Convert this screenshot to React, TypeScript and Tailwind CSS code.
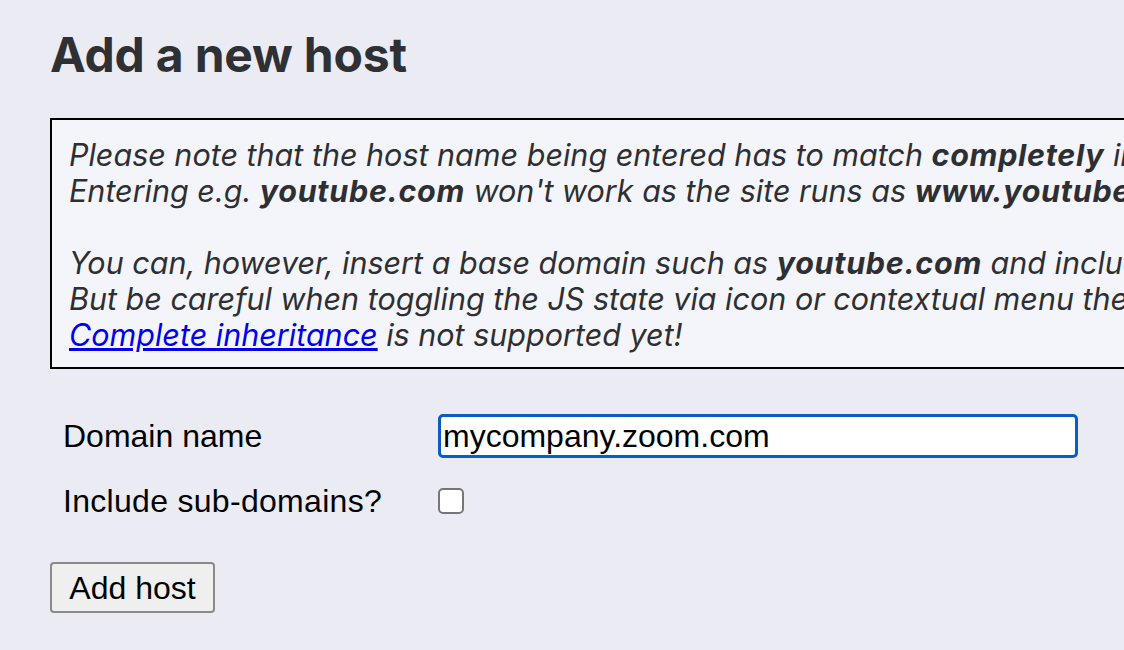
import React from "react";

export default function App() {
  const inter = { fontFamily: "Inter, 'Noto Sans', sans-serif" };
  const arial = { fontFamily: "'Liberation Sans', Arial, sans-serif" };
  const B = ({ children }: { children: React.ReactNode }) => (
    <b className="font-bold tracking-[0.7px]">{children}</b>
  );
  return (
    <div className="w-[1124px] h-[650px] overflow-hidden bg-[#ebebf3]">
      <div className="pl-[50px] w-[1300px]">
        <h2
          className="pt-[26px] text-[48px] leading-[58px] font-bold text-[#2f3034] tracking-[-0.2px]"
          style={inter}
        >
          Add a new host
        </h2>
        <div
          className="mt-[34px] w-[1200px] border-2 border-black bg-[#f4f5fa] pl-[17px] pt-[17px] pb-[14px] text-[30.5px] leading-[36px] italic text-[#2e2f33] whitespace-nowrap"
          style={inter}
        >
          Please note that the host name being entered has to match <B>completely</B> in order to work.
          <br />
          Entering e.g. <B>youtube.com</B> won't work as the site runs as <B>www.youtube.com</B>.
          <br />
          <br />
          You can, however, insert a base domain such as <B>youtube.com</B> and include sub-domains.
          <br />
          But be careful when toggling the JS state via icon or contextual menu then!
          <br />
          <a href="#" className="text-[#0000ee] underline">
            Complete inheritance
          </a>{" "}
          is not supported yet!
        </div>
        <div className="mt-[45px] flex flex-col text-[32px] text-black" style={arial}>
          <div className="flex items-center h-[44px]">
            <div className="w-[388px] pl-[13px]">Domain name</div>
            <div className="w-[640px] h-[44px] rounded-[5px] border-[3px] border-[#0b5cc4] bg-white flex items-center pl-[2px] leading-none">
              mycompany.zoom.com
            </div>
          </div>
          <div className="flex items-center h-[44px] mt-[21px]">
            <div className="w-[388px] pl-[13px] tracking-[0.3px]">Include sub-domains?</div>
            <div className="w-[26px] h-[26px] rounded-[5px] border-2 border-[#767676] bg-white" />
          </div>
          <div className="mt-[39px]">
            <button className="w-[165px] h-[51px] bg-[#efefef] border-2 border-[#8a8a8a] rounded-[4px] text-[32px] text-black leading-none" style={arial}>
              Add host
            </button>
          </div>
        </div>
      </div>
    </div>
  );
}
